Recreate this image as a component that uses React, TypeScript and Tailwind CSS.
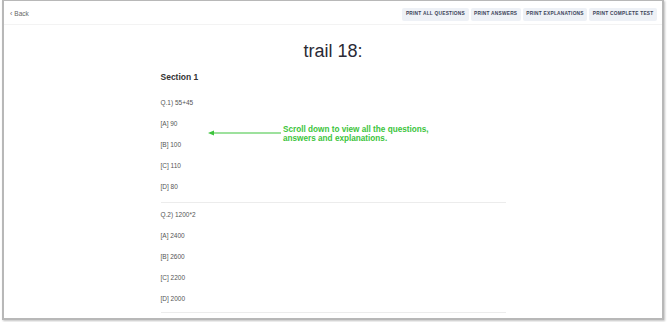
import React from "react";

const Option = ({ children }: { children: React.ReactNode }) => (
  <div className="h-[21px] flex items-center text-[6.5px] text-[#555]">{children}</div>
);

export default function App() {
  const btns = ["PRINT ALL QUESTIONS", "PRINT ANSWERS", "PRINT EXPLANATIONS", "PRINT COMPLETE TEST"];
  return (
    <div className="w-[670px] h-[322px] bg-white overflow-hidden" style={{ fontFamily: '"Liberation Sans", Arial, sans-serif' }}>
      <div className="ml-[2px] w-[662px] h-[320px] border-x-2 border-b-2 border-t border-[#b8b8b8] shadow-[1px_1px_2px_rgba(0,0,0,0.25)] bg-white overflow-hidden relative">
        <div className="h-[24px] flex items-center justify-between pl-[6px] pr-[5px] border-b border-[#f3f3f3]">
          <div className="text-[6.5px] text-[#666] flex items-center gap-[2px] pt-[3px]">
            <span className="text-[7px]">‹</span>
            <span>Back</span>
          </div>
          <div className="flex gap-[2px] pt-[3px]">
            {btns.map((b) => (
              <div key={b} className="h-[13px] px-[3.5px] flex items-center rounded-[2px] bg-[#eef1f6] text-[4.8px] font-bold tracking-[0.25px] text-[#3a4256]">
                {b}
              </div>
            ))}
          </div>
        </div>
        <div className="w-[345px] mx-auto">
          <div className="text-center text-[18px] text-[#2a2a35] mt-[15px] leading-[22px]">trail 18:</div>
          <div className="mt-[10px] text-[8.5px] font-bold text-[#333] leading-[10px]">Section 1</div>
          <div className="mt-[10px]">
            <Option>Q.1) 55+45</Option>
            <Option>[A] 90</Option>
            <Option>[B] 100</Option>
            <Option>[C] 110</Option>
            <Option>[D] 80</Option>
          </div>
          <div className="border-t border-[#ececec] mt-[5px]" />
          <div className="mt-[1px]">
            <Option>Q.2) 1200*2</Option>
            <Option>[A] 2400</Option>
            <Option>[B] 2600</Option>
            <Option>[C] 2200</Option>
            <Option>[D] 2000</Option>
          </div>
          <div className="border-t border-[#ececec] mt-[3px]" />
        </div>
        <div className="absolute left-[204px] top-[124px] flex items-start">
          <svg width="73" height="10" viewBox="0 0 73 10" className="mt-[3px]">
            <line x1="4" y1="5" x2="73" y2="5" stroke="#3cc43c" strokeWidth="1.2" />
            <polygon points="0,5 6,2.5 6,7.5" fill="#3cc43c" />
          </svg>
          <div className="ml-[2px] text-[8.2px] font-bold text-[#3cc43c] leading-[9px]">
            Scroll down to view all the questions,
            <br />
            answers and explanations.
          </div>
        </div>
      </div>
    </div>
  );
}
